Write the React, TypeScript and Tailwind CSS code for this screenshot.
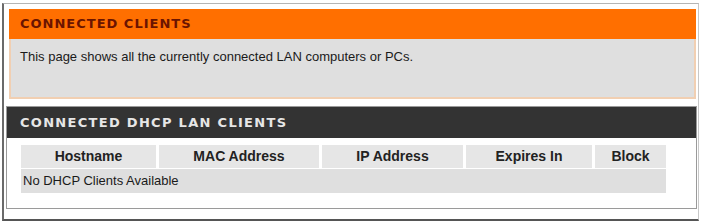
export default function App() {
  const cols = [
    { label: "Hostname", w: "w-[135px]" },
    { label: "MAC Address", w: "w-[160px]" },
    { label: "IP Address", w: "w-[141px]" },
    { label: "Expires In", w: "w-[126px]" },
    { label: "Block", w: "w-[71px]" },
  ];

  return (
    <div className="w-[701px] h-[223px] bg-white pt-[3px] pl-[2px] pr-[2px] font-['Liberation_Sans',Tahoma,sans-serif]">
      <div className="h-[218px] border-l-2 border-l-[#6a6a6a] border-t border-t-[#b5b5b5] border-r border-r-[#c8c8c8] border-b-2 border-b-[#555] pt-[5px] pl-[2px] pr-[1px]">
        {/* Connected clients */}
        <div className="ml-[3px] mr-[1px]">
          <div className="h-[30px] bg-[#ff6f00] flex items-center pl-[11px]">
            <span className="font-['DejaVu_Sans',Verdana,sans-serif] font-bold text-[13px] tracking-[1px] text-[#6b1400]">
              CONNECTED CLIENTS
            </span>
          </div>
          <div className="h-[60px] bg-[#dfdfdf] border-2 border-t-0 border-[#f1cfb2] pl-[9px] pt-[8px] text-[13px] text-[#1a1a1a]">
            This page shows all the currently connected LAN computers or PCs.
          </div>
        </div>

        {/* Connected DHCP LAN clients */}
        <div className="mt-[7px] border border-[#9a9a9a] h-[103px]">
          <div className="h-[31px] bg-[#333333] flex items-center pl-[13px]">
            <span className="font-['DejaVu_Sans',Verdana,sans-serif] font-bold text-[13px] tracking-[1.3px] text-[#e6e6e6]">
              CONNECTED DHCP LAN CLIENTS
            </span>
          </div>
          <div className="pl-[14px] pt-[7px]">
            <div className="w-[645px]">
              <div className="flex gap-[3px] bg-white">
                {cols.map((c) => (
                  <div
                    key={c.label}
                    className={`${c.w} h-[23px] bg-[#e6e6e6] flex items-center justify-center font-bold text-[14px] text-[#222]`}
                  >
                    {c.label}
                  </div>
                ))}
              </div>
              <div className="mt-[1px] h-[24px] bg-[#dfdfdf] flex items-center pl-[2px] text-[13px] text-[#1a1a1a]">
                No DHCP Clients Available
              </div>
            </div>
          </div>
        </div>
      </div>
    </div>
  );
}
